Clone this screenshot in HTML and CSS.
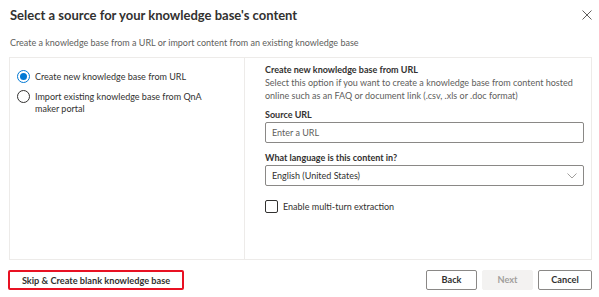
FILE: index.html
```html
<!DOCTYPE html>
<html>
<head>
<meta charset="utf-8">
<link rel="stylesheet" href="styles.css">
</head>
<body>
<div class="dialog">
  <div class="header">
    <h1 class="title">Select a source for your knowledge base's content</h1>
    <button class="close" aria-label="Close">
      <svg width="10" height="10" viewBox="0 0 10 10"><path d="M0.5 0.5 L9.5 9.5 M9.5 0.5 L0.5 9.5" stroke="#605e5c" stroke-width="1" fill="none"/></svg>
    </button>
  </div>
  <p class="subtitle">Create a knowledge base from a URL or import content from an existing knowledge base</p>
  <div class="panel">
    <div class="options">
      <label class="option">
        <span class="radio checked"></span>
        <span class="option-text">Create new knowledge base from URL</span>
      </label>
      <label class="option">
        <span class="radio"></span>
        <span class="option-text">Import existing knowledge base from QnA maker portal</span>
      </label>
    </div>
    <div class="details">
      <div class="section-title">Create new knowledge base from URL</div>
      <div class="desc">Select this option if you want to create a knowledge base from content hosted online such as an FAQ or document link (.csv, .xls or .doc format)</div>
      <div class="field-label">Source URL</div>
      <div class="input"><span class="placeholder">Enter a URL</span></div>
      <div class="field-label lang">What language is this content in?</div>
      <div class="input select">
        <span class="value">English (United States)</span>
        <svg width="10" height="6" viewBox="0 0 10 6"><path d="M0.5 0.5 L5 5 L9.5 0.5" stroke="#a19f9d" stroke-width="1" fill="none"/></svg>
      </div>
      <label class="check">
        <span class="box"></span>
        <span class="check-text">Enable multi-turn extraction</span>
      </label>
    </div>
  </div>
  <div class="footer">
    <button class="btn skip">Skip &amp; Create blank knowledge base</button>
    <div class="actions">
      <button class="btn back">Back</button>
      <button class="btn next" disabled>Next</button>
      <button class="btn cancel">Cancel</button>
    </div>
  </div>
</div>
</body>
</html>
```

FILE: styles.css
```css
* { box-sizing: border-box; }
html, body { margin: 0; padding: 0; background: #ffffff; }
body { font-family: Lato, "Open Sans", sans-serif; color: #323130; }
.dialog { width: 599px; height: 297px; padding: 0 7px 0 9px; }
.header { display: flex; align-items: center; justify-content: space-between; height: 29px; padding-left: 1px; }
.title { margin: 0; font-size: 13px; font-weight: 700; color: #323130; line-height: 20px; }
.close { border: 0; background: none; padding: 0; width: 16px; height: 16px; display: flex; align-items: center; justify-content: center; margin-right: -3px; }
.subtitle { margin: 7px 0 0 1px; font-size: 9px; line-height: 14px; color: #605e5c; }
.panel { margin-top: 7px; height: 203px; border: 1px solid #edebe9; display: grid; grid-template-columns: 235px 1fr; }
.options { border-right: 1px solid #edebe9; padding: 12px 0 0 7px; display: flex; flex-direction: column; gap: 7px; }
.option { display: flex; align-items: flex-start; gap: 5px; font-size: 9px; line-height: 12px; color: #323130; }
.option-text { width: 170px; padding-top: 1px; }
.radio { flex: none; width: 13px; height: 13px; border: 1px solid #323130; border-radius: 50%; position: relative; }
.radio.checked { border-color: #0078d4; }
.radio.checked::after { content: ""; position: absolute; left: 2px; top: 2px; width: 7px; height: 7px; border-radius: 50%; background: #0078d4; }
.details { padding: 5px 7px 0 20px; }
.section-title { font-size: 9px; font-weight: 700; line-height: 14px; color: #323130; }
.desc { font-size: 9px; line-height: 12.5px; color: #605e5c; margin-top: 0; }
.field-label { font-size: 9px; font-weight: 700; line-height: 14px; margin-top: 6px; color: #323130; }
.field-label.lang { margin-top: 8px; }
.input { height: 21px; border: 1px solid #8a8886; border-radius: 2px; display: flex; align-items: center; padding: 0 6px 0 6px; font-size: 9px; margin-top: 0; }
.placeholder { color: #605e5c; }
.select { justify-content: space-between; }
.value { color: #323130; }
.check { display: flex; align-items: center; gap: 5px; margin-top: 14px; font-size: 9px; color: #323130; }
.box { width: 13px; height: 13px; border: 1px solid #323130; border-radius: 2px; flex: none; }
.footer { display: flex; justify-content: space-between; align-items: center; margin-top: 10px; margin-left: -1px; }
.btn { font-family: inherit; font-size: 9.2px; font-weight: 700; height: 20px; border: 1px solid #8a8886; border-radius: 2px; background: #ffffff; color: #323130; padding: 0 4px; line-height: 18px; }
.skip { width: 176px; border: 2px solid #e81123; }
.actions { display: flex; gap: 5px; }
.back { width: 51px; }
.next { width: 51px; background: #f3f2f1; border-color: #f3f2f1; color: #a19f9d; }
.cancel { width: 54px; }
```
